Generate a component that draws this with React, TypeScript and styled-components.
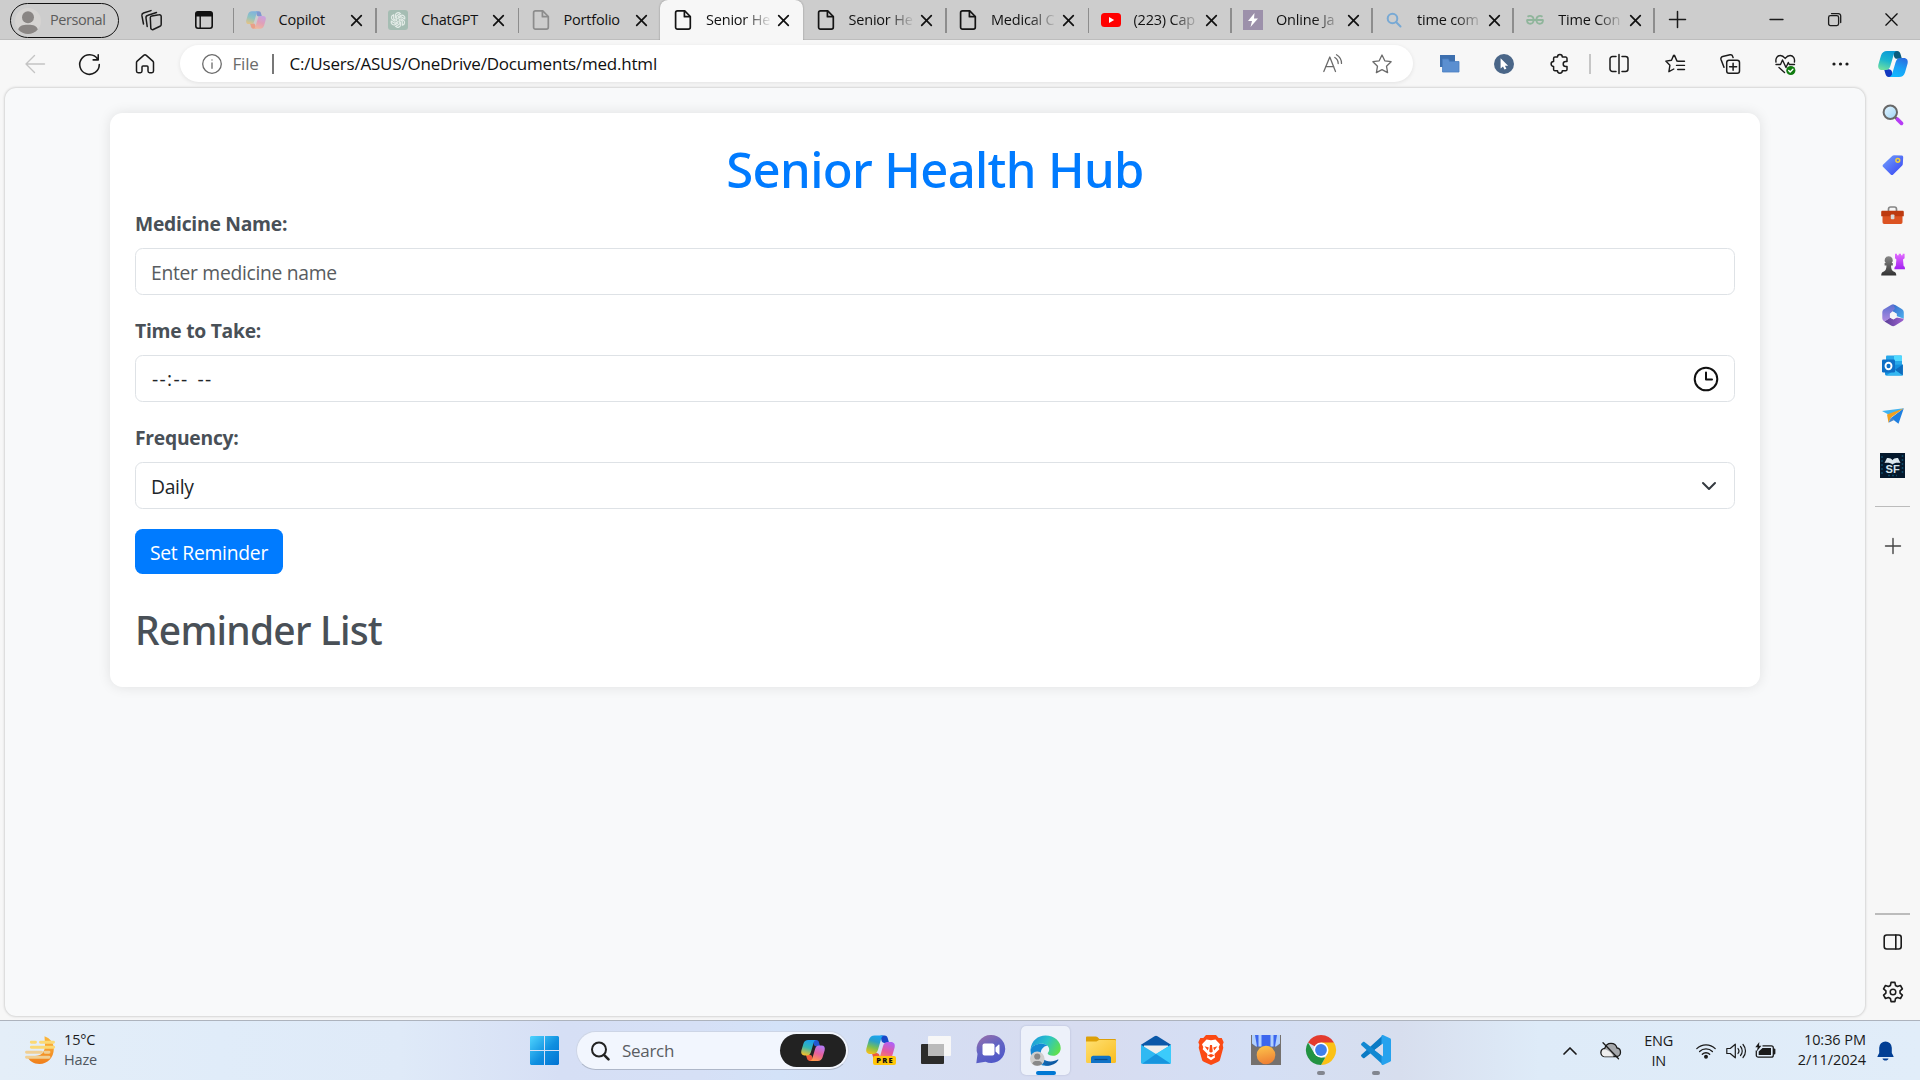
import React from "react";
import styled, { createGlobalStyle, css } from "styled-components";

const GlobalStyle = createGlobalStyle`
  *, *::before, *::after { box-sizing: border-box; }
  html, body { margin: 0; height: 100%; overflow: hidden; }
  body { font-family: "Open Sans", "Noto Sans", sans-serif; color: #1b1b1b; }
  svg { display: block; flex: none; overflow: visible; }
`;

/* ---------- window ---------- */

const Desktop = styled.div`
  width: 1920px;
  height: 1080px;
  display: flex;
  flex-direction: column;
  background: #f7f7f7;
  overflow: hidden;
`;

/* ---------- tab strip ---------- */

const TabStrip = styled.header`
  height: 40px;
  flex: none;
  display: flex;
  align-items: stretch;
  background: #cdcdcd;
  box-shadow: inset 0 -1px 0 #bdbdbd;
`;

const ProfileButton = styled.div`
  width: 109px;
  height: 35px;
  margin: 3px 0 0 10px;
  padding-left: 4px;
  display: flex;
  align-items: center;
  gap: 9px;
  border: 1.5px solid #111;
  border-radius: 18px;
  font-size: 14.5px;
  letter-spacing: -0.45px;
  color: #5c5c5c;
`;

const ProfileName = styled.span`
  padding-bottom: 2px;
`;

const StripTools = styled.div`
  width: 113.5px;
  padding: 0 20px 0 22px;
  display: flex;
  align-items: center;
  justify-content: space-between;
`;

const Tabs = styled.div`
  display: flex;
`;

const Tab = styled.div<{ $active?: boolean; $plain?: boolean }>`
  flex: none;
  width: 142.5px;
  display: flex;
  align-items: center;
  &:nth-child(n + 8) {
    width: 141.1px;
  }
  &::before {
    content: "";
    width: 1.5px;
    height: 25px;
    background: ${(p) => (p.$active || p.$plain ? "transparent" : "#8d8d8d")};
  }
  ${(p) =>
    p.$active &&
    css`
      background: #f7f7f7;
      border-radius: 8px 8px 0 0;
      box-shadow: 0 0 2px rgba(0, 0, 0, 0.35);
      clip-path: inset(0 -6px 0 -6px);
    `}
`;

const TabIcon = styled.span`
  width: 20px;
  margin-left: 11.5px;
  display: flex;
  justify-content: center;
`;

const TabLabel = styled.span<{ $fade?: boolean }>`
  width: 65px;
  margin-left: 13px;
  padding-bottom: 2px;
  white-space: nowrap;
  font-size: 14.5px;
  letter-spacing: -0.2px;
  color: #111;
  ${(p) =>
    p.$fade &&
    css`
      mask-image: linear-gradient(90deg, #000 38px, transparent 66px);
    `}
`;

const TabClose = styled.span`
  margin-left: 7px;
`;

const EndRule = styled.span`
  width: 1.5px;
  height: 25px;
  align-self: center;
  background: #8d8d8d;
`;

const NewTab = styled.span`
  margin-left: 14px;
  padding-bottom: 1px;
  display: flex;
  align-items: center;
`;

const WindowControls = styled.div`
  margin-left: auto;
  padding: 0 22px 1px 0;
  display: flex;
  align-items: center;
  gap: 44.5px;
`;

/* ---------- toolbar ---------- */

const Toolbar = styled.div`
  height: 48px;
  flex: none;
  display: flex;
  align-items: center;
  padding-left: 25px;
`;

const NavButtons = styled.div`
  width: 155px;
  display: flex;
  gap: 34.4px;
  align-items: center;
`;

const AddressBar = styled.div`
  width: 1233px;
  height: 37px;
  margin-top: -1px;
  padding: 0 21px 0 22px;
  display: flex;
  align-items: center;
  border-radius: 19px;
  background: #fff;
  box-shadow: 0 1px 4px rgba(0, 0, 0, 0.09);
  font-size: 17px;
`;

const Scheme = styled.span`
  width: 39.5px;
  margin-left: 10.5px;
  color: #6b6b6b;
  letter-spacing: -0.2px;
`;

const AddressRule = styled.span`
  width: 1.5px;
  height: 20px;
  background: #777;
`;

const Url = styled.span`
  margin-left: 16px;
  letter-spacing: -0.2px;
  color: #101010;
`;

const AddressActions = styled.span`
  margin-left: auto;
  display: flex;
  align-items: center;
  gap: 29px;
`;

const Actions = styled.div`
  flex: 1;
  display: flex;
  align-items: center;
  padding-left: 16px;
`;

const Action = styled.span<{ $w?: number }>`
  flex: none;
  width: ${(p) => p.$w ?? 55}px;
  display: flex;
  justify-content: center;
`;

const ActionRule = styled.span`
  width: 1.5px;
  height: 20px;
  background: #c6c6c6;
`;

/* ---------- page and sidebar ---------- */

const Body = styled.div`
  flex: 1;
  display: flex;
  padding: 0 0 4px 5px;
`;

const Viewport = styled.main`
  width: 1860px;
  padding: 25px 105px;
  border-radius: 11px;
  background: #f8f9fa;
  box-shadow: 0 0 3px rgba(0, 0, 0, 0.28);
`;

const Card = styled.section`
  padding: 25px;
  height: 574px;
  border-radius: 12.5px;
  background: #fff;
  box-shadow: 0 0 12.5px rgba(0, 0, 0, 0.1);
`;

const Title = styled.h1`
  margin: 0 0 10px;
  padding-top: 1px;
  height: 60px;
  font: 500 49px/60px "Noto Sans", sans-serif;
  letter-spacing: -0.65px;
  text-align: center;
  color: #007bff;
`;

const Field = styled.div`
  margin-bottom: 20px;
`;

const Label = styled.label`
  display: block;
  height: 30px;
  margin-bottom: 10px;
  font-size: 19.3px;
  line-height: 31px;
  font-weight: 700;
  letter-spacing: -0.25px;
  color: #495057;
`;

const Control = styled.div<{ $placeholder?: boolean }>`
  height: 47px;
  padding: 0 15.5px 0 15px;
  display: flex;
  align-items: center;
  justify-content: space-between;
  border: 1.25px solid #dee2e6;
  border-radius: 7.5px;
  font-size: 19.3px;
  letter-spacing: -0.3px;
  color: ${(p) => (p.$placeholder ? "#585c60" : "#212529")};
`;

const ControlText = styled.span`
  padding-top: 2px;
`;

const TimeValue = styled.span`
  padding: 0 0 0 1px;
  letter-spacing: 1.35px;
  word-spacing: 2.5px;
`;

const SubmitButton = styled.button`
  width: 148px;
  height: 45px;
  padding: 1px 0 0;
  border: 0;
  border-radius: 7.5px;
  background: #007bff;
  color: #fff;
  font: 400 19.3px "Open Sans", sans-serif;
  letter-spacing: -0.25px;
`;

const ListTitle = styled.h2`
  margin: 30.5px 0 0;
  font: 500 39px/49px "Noto Sans", sans-serif;
  letter-spacing: -0.8px;
  color: #495057;
`;

const Sidebar = styled.aside`
  flex: 1;
  padding: 2px 0 13px 0;
  display: flex;
  flex-direction: column;
  align-items: center;
`;

const SideSlot = styled.span<{ $h?: number }>`
  flex: none;
  height: ${(p) => p.$h ?? 50.1}px;
  display: flex;
  align-items: center;
`;

const SideRule = styled.span`
  width: 35px;
  height: 1.5px;
  background: #bcbcbc;
`;

const SideBottom = styled.div`
  margin-top: auto;
  display: flex;
  flex-direction: column;
  align-items: center;
`;

const SettingsSlot = styled.span`
  margin-top: 29px;
`;

/* ---------- taskbar ---------- */

const Taskbar = styled.footer`
  height: 60px;
  flex: none;
  display: grid;
  grid-template-columns: 530px 874px 1fr;
  align-items: center;
  border-top: 1px solid #adb3bd;
  background: linear-gradient(90deg, #e4eef8 0, #e0ecf9 220px, #dfeaf8 400px, #d6dff5 560px, #d6e0f6 700px, #d3e2f8 780px, #d5def3 900px, #d7dcf0 1080px, #d4dff5 1250px, #d7deee 1400px, #deebf8 1540px, #e1edf9 1920px);
`;

const Weather = styled.div`
  display: flex;
  align-items: center;
  gap: 9px;
  padding: 0 0 1px 25px;
`;

const TwoLines = styled.div<{ $align?: string }>`
  display: flex;
  flex-direction: column;
  font-size: 14.5px;
  line-height: 20px;
  text-align: ${(p) => p.$align ?? "left"};
  letter-spacing: -0.15px;
  white-space: nowrap;
`;

const Clock = styled(TwoLines)`
  letter-spacing: -0.05px;
  padding-bottom: 1px;
`;

const Muted = styled.span`
  color: #50575f;
`;

const Apps = styled.div`
  display: flex;
  align-items: center;
`;

const SearchBox = styled.div`
  flex: none;
  width: 273px;
  height: 39px;
  margin: 0 4px 0 17px;
  padding: 0 2px 0 13px;
  display: flex;
  align-items: center;
  border-radius: 20px;
  border: 1px solid #cdd5e6;
  border-bottom-color: #aeb7c9;
  background: #f2f6fe;
  font-size: 17px;
  letter-spacing: -0.3px;
  color: #5a5d62;
`;

const SearchText = styled.span`
  margin-left: 12px;
  flex: 1;
`;

const CopilotPill = styled.span`
  width: 66px;
  height: 33px;
  display: flex;
  align-items: center;
  justify-content: center;
  border-radius: 17px;
  background: #222;
`;

const TaskButton = styled.div<{ $active?: boolean; $running?: boolean }>`
  flex: none;
  width: 49px;
  height: 49px;
  margin: 0 3px;
  display: flex;
  flex-direction: column;
  align-items: center;
  justify-content: space-between;
  padding-top: 9px;
  border-radius: 5px;
  ${(p) =>
    p.$active &&
    css`
      background: #edf1fa;
      box-shadow: 0 0 2px rgba(80, 90, 130, 0.3);
    `}
  &::after {
    content: "";
    width: ${(p) => (p.$active ? 20 : 8)}px;
    height: 4px;
    border-radius: 2px;
    background: ${(p) => (p.$active ? "#0078d4" : p.$running ? "#82868f" : "transparent")};
  }
`;

const Tray = styled.div`
  display: flex;
  align-items: center;
  justify-content: flex-end;
  padding-right: 16px;
`;

const TrayIcons = styled.div`
  width: 80px;
  display: flex;
  align-items: center;
  justify-content: space-between;
  margin: 0 21.5px 0 23px;
`;

/* ---------- line icons ---------- */

type LineProps = { size?: number; box?: number; color?: string; width?: number; children: React.ReactNode };
const Line = ({ size = 20, box = 20, color = "#1b1b1b", width = 1.4, children }: LineProps) => (
  <svg width={size} height={size} viewBox={`0 0 ${box} ${box}`} fill="none" stroke={color} strokeWidth={width} strokeLinecap="round" strokeLinejoin="round">
    {children}
  </svg>
);

const CloseIcon = ({ size = 11, width = 1.7 }) => (
  <Line size={size} box={11} width={width} color="#111"><path d="M.7.7l9.6 9.6M10.3.7L.7 10.3" /></Line>
);
const DocIcon = ({ dim }: { dim?: boolean }) => (
  <Line color={dim ? "#8c8c8c" : "#141414"} width={1.7}>
    <path d="M4.5.9h7.2l5.6 5.6v10.8a1.9 1.9 0 0 1-1.9 1.9H4.5a1.9 1.9 0 0 1-1.9-1.9V2.8A1.9 1.9 0 0 1 4.5.9z" />
    <path d="M11.4 1.2v5.5h5.6" />
  </Line>
);

/* ---------- coloured icons ---------- */

type SwirlProps = { id: string; w: number; h: number; left: string[]; right: string[]; fold: string; foldEnd: string };
const Swirl = ({ id, w, h, left, right, fold, foldEnd }: SwirlProps) => (
  <svg width={w} height={h} viewBox="0 0 30 26">
    <defs>
      <linearGradient id={id + "a"} x1=".6" y1="0" x2=".3" y2="1">
        {left.map((c, i) => <stop key={i} offset={i / (left.length - 1)} stopColor={c} />)}
      </linearGradient>
      <linearGradient id={id + "b"} x1=".7" y1="0" x2=".3" y2="1">
        {right.map((c, i) => <stop key={i} offset={i / (right.length - 1)} stopColor={c} />)}
      </linearGradient>
    </defs>
    <path d="M15 0h4.2c2 0 2.9 1.3 3.4 3.2l1.3 4.6h-4.5c-2 0-3-.9-3.4-2.6z" fill={fold} />
    <path d="M15 26h-4.2c-2 0-2.9-1.3-3.4-3.2L6.1 18.2h4.5c2 0 3 .9 3.4 2.6z" fill={foldEnd} />
    <path d="M9 0h10.2c-1.8 0-2.8 1.2-3.4 3.2l-3.3 11.3c-.8 2.8-2 4.6-5 4.6H4.4C.9 19.1-.3 16.7.4 13.4L3 4.5C4 1.5 5.9 0 9 0z" fill={`url(#${id}a)`} />
    <path d="M21 26H10.8c1.8 0 2.8-1.2 3.4-3.2l3.3-11.3c.8-2.8 2-4.6 5-4.6h3.1c3.5 0 4.7 2.4 4 5.7l-2.6 8.9c-1 3-2.900 4.500-6 4.500z" fill={`url(#${id}b)`} />
  </svg>
);

const Avatar = ({ size = 26 }) => (
  <svg width={size} height={size} viewBox="0 0 26 26">
    <circle cx="13" cy="13" r="13" fill="#d6d4d2" />
    <circle cx="13" cy="9.3" r="6" fill="#8a8684" />
    <path d="M3.2 21.5c1-3.500 4-4.800 9.800-4.800s8.800 1.300 9.800 4.800A13 13 0 0 1 13 26a13 13 0 0 1-9.800-4.500z" fill="#8a8684" />
  </svg>
);

const ChatGptIcon = () => (
  <svg width="20" height="20" viewBox="0 0 20 20">
    <rect width="20" height="20" rx="3" fill="#a5bdb3" />
    <g fill="none" stroke="#e4ece8" strokeWidth="1.15">
      {[0, 60, 120, 180, 240, 300].map((a) => (
        <path key={a} transform={`rotate(${a} 10 10)`} d="M7.4 8.500V5.600a2.900 2.900 0 0 1 5-2l-3.700 2.200v4.100" />
      ))}
    </g>
  </svg>
);

const YoutubeIcon = () => (
  <svg width="20" height="14" viewBox="0 0 20 14"><rect width="20" height="14" rx="3.5" fill="#f00" /><path d="M8 4l5.200 3L8 10z" fill="#fff" /></svg>
);
const BoltIcon = () => (
  <svg width="20" height="20" viewBox="0 0 20 20"><rect width="20" height="20" fill="#9c90aa" /><path d="M11.500 3L5 11h4l-1.500 6L15 8.500h-4z" fill="#fff" /></svg>
);
const LookupIcon = () => (
  <Line color="#78a9d4" width={2}><circle cx="8.5" cy="8.5" r="4.8" /><path d="M12.300 12.300l4.200 4.200" /></Line>
);
const GeeksIcon = () => (
  <svg width="18" height="10" viewBox="0 0 18 10" fill="none" stroke="#8fb59b" strokeWidth="1.8">
    <path d="M1.500 1.800C3.500.2 7.600.5 7.600 4.800M.5 5h17M1 5c0 4.800 6.600 5.200 6.600 0M16.500 1.800C14.500.2 10.400.5 10.400 4.800M17 5c0 4.800-6.600 5.200-6.600 0" />
  </svg>
);

const WindowsExt = () => (
  <svg width="20" height="18" viewBox="0 0 20 18">
    <path d="M0 0h15v12H0z" fill="#3d6fae" />
    <path d="M2.500 4h6l1 2.500H19V17H2.500z" fill="#5b8fd0" stroke="#4a7fc2" strokeWidth=".8" />
  </svg>
);
const CursorExt = () => (
  <svg width="20" height="20" viewBox="0 0 20 20"><circle cx="10" cy="10" r="10" fill="#4a6688" /><path d="M6.600 4.200v10.400l2.400-2.100 1.500 3.100 1.900-.9-1.500-3h3.200z" fill="#fff" /></svg>
);
const PuzzleIcon = () => (
  <Line width={1.5}><path d="M7.500 3a2.400 2.400 0 0 1 4.800 0h3.300a1.400 1.400 0 0 1 1.400 1.400v3h-1.300a2.500 2.500 0 0 0 0 5H17v3a1.400 1.400 0 0 1-1.400 1.400h-3.300a2.400 2.400 0 0 1-4.800 0H5a1.400 1.400 0 0 1-1.400-1.400v-3a2.500 2.500 0 0 1 0-5v-3A1.400 1.400 0 0 1 5 3z" /></Line>
);
const SplitIcon = () => (
  <Line width={1.5}><path d="M10 .5v19M7 2.500H3.500A2.500 2.500 0 0 0 1 5v10a2.500 2.500 0 0 0 2.500 2.500H7M13 2.500h3.500A2.500 2.500 0 0 1 19 5v10a2.500 2.500 0 0 1-2.500 2.500H13" /></Line>
);
const FavoritesIcon = () => (
  <Line><path d="M12 7.100l-2.500-5.700a.5.5 0 0 0-.9 0L6.500 6.300.8 7.100l4.100 4.200-1 6.400 4.900-2.700M12.700 7.200h6.800M11.500 11.400h8M12.700 15.500h6.800" /></Line>
);
const CollectionsIcon = () => (
  <Line width={1.5}><rect x="6.7" y="6.2" width="12.8" height="13" rx="2.3" /><path d="M13.100 9.200v7M9.600 12.700h7M4 13.200L1 5.400a2.300 2.300 0 0 1 1.700-3L10 .8a2.300 2.300 0 0 1 2.700 1.600l.4 1.200" /></Line>
);
const HealthIcon = () => (
  <svg width="21" height="21" viewBox="0 0 21 21" fill="none" stroke="#1b1b1b" strokeWidth="1.4" strokeLinecap="round" strokeLinejoin="round">
    <path d="M1 8C.3 4.500 2.300 1.500 5.300 1.500 7.700 1.500 9 2.900 10.200 4.400 11.400 2.900 12.700 1.500 15.100 1.500c3 0 5 3 4.300 6.500M1 10.500h4.500l2-4.500 3.500 7.500 2.300-5 1 2h5.200M4 13.500l5.500 5" />
    <circle cx="15.8" cy="16.5" r="4.6" fill="#107c10" stroke="none" />
    <path d="M13.700 16.600l1.500 1.500 2.700-2.800" stroke="#fff" />
  </svg>
);

const MagnifierColor = () => (
  <svg width="22" height="22" viewBox="0 0 22 22">
    <defs><linearGradient id="mgl" x1="0" y1="0" x2="1" y2="1"><stop offset="0" stopColor="#e4f5ff" /><stop offset="1" stopColor="#9fd4f5" /></linearGradient></defs>
    <path d="M13 13l2.500 2.500" stroke="#666" strokeWidth="2.5" />
    <path d="M15.500 15.300l4 4" stroke="#b63cf5" strokeWidth="3.8" strokeLinecap="round" />
    <circle cx="8.3" cy="8.3" r="6.7" fill="url(#mgl)" stroke="#686868" strokeWidth="2" />
  </svg>
);
const TagIcon = () => (
  <svg width="22" height="22" viewBox="0 0 22 22">
    <defs><linearGradient id="tag" x1="0" y1="0" x2="1" y2="1"><stop offset="0" stopColor="#74a4fb" /><stop offset="1" stopColor="#3540f4" /></linearGradient></defs>
    <path d="M12 1.300l7.500.2c1 0 1.700.7 1.700 1.700l-.4 6.900c0 .7-.3 1.200-.8 1.700l-8.800 8.700c-.8.8-1.700.8-2.500 0L1.200 13c-.8-.8-.8-1.700 0-2.500l9-8.500c.5-.5 1.100-.7 1.800-.7z" fill="url(#tag)" />
    <circle cx="15.8" cy="6.3" r="1.9" fill="#5073e8" stroke="#f3cf3b" strokeWidth="1.5" />
  </svg>
);
const ToolboxIcon = () => (
  <svg width="23" height="19" viewBox="0 0 23 19">
    <path d="M7.500 5V3.200C7.500 1.800 8.300 1 9.600 1h3.800c1.300 0 2.100.8 2.100 2.200V5" fill="none" stroke="#858585" strokeWidth="1.7" />
    <path d="M1.500 9.500h20v6.700a1.700 1.700 0 0 1-1.700 1.700H3.200a1.700 1.700 0 0 1-1.700-1.700z" fill="#dc5322" />
    <path d="M1.500 4.800h20c.8 0 1.300.5 1.300 1.300v4.200H.2V6.100c0-.8.5-1.300 1.300-1.300z" fill="#bd3a10" />
    <rect x="9.8" y="8.5" width="3.6" height="4.8" rx=".8" fill="#d9d9d9" />
  </svg>
);
const ChessIcon = () => (
  <svg width="24" height="24" viewBox="0 0 24 24">
    <defs>
      <linearGradient id="pawn" x1="0" y1="0" x2="0" y2="1"><stop offset="0" stopColor="#888" /><stop offset="1" stopColor="#333" /></linearGradient>
      <linearGradient id="rook" x1="0" y1="0" x2="0" y2="1"><stop offset="0" stopColor="#e26bff" /><stop offset="1" stopColor="#a020f0" /></linearGradient>
    </defs>
    <path d="M14 .8h2v1.500h1.700V.8h2.300v1.500h1.600V.8h2v4.400l-1.600 1.300.6 6.500c1.300.5 1.400 1.700 1.400 3.300H13.400c0-1.700.3-2.800 1.400-3.300l.6-6.500L14 5.200z" fill="url(#rook)" />
    <path d="M7.700 3.200a4 4 0 0 1 3 6.700h1.100v2.500H10c.1 3 .6 4.900 2.600 6 1.800.5 2.700 1.800 2.700 4H.2c0-2.200.9-3.500 2.700-4 2-1.100 2.500-3 2.600-6H3.600V9.900h1.100a4 4 0 0 1 3-6.700z" fill="url(#pawn)" />
  </svg>
);
const M365Icon = () => (
  <svg width="22" height="23" viewBox="0 0 22 23">
    <defs>
      <linearGradient id="ma" x1="0" y1="0" x2="0" y2="1"><stop offset="0" stopColor="#5a6fd0" /><stop offset="1" stopColor="#b08ae0" /></linearGradient>
      <linearGradient id="mb" x1="0" y1="0" x2="1" y2="1"><stop offset="0" stopColor="#3565c8" /><stop offset="1" stopColor="#4fb0ee" /></linearGradient>
      <linearGradient id="mc" x1="0" y1="0" x2="1" y2="0"><stop offset="0" stopColor="#5b3f98" /><stop offset="1" stopColor="#9d62cf" /></linearGradient>
    </defs>
    <path d="M9 1c1.400-.8 2.800-.8 4.200 0l6.600 4c1.400.8 2 1.900 2 3.500v6.200L14.500 12V9.800L10 7z" fill="url(#mb)" />
    <path d="M2.500 17.400L8.100 13.500l3.200 1.800 3.200-1.800 7.200 1.200c-.2 1.300-.8 2.200-2 2.900l-6.500 4c-1.400.8-2.800.8-4.200 0z" fill="url(#mc)" />
    <path d="M11.500.4L13 4.500 8.100 9.800v4.200L2.500 17.400C1 16.500.3 15.500.3 14V8.500c0-1.600.7-2.800 2-3.500L9 1z" fill="url(#ma)" />
    <path d="M11.300 7.800l3.400 1.900v3.900l-3.400 1.900-3.400-1.900V9.700z" fill="#f7f7f7" />
  </svg>
);
const OutlookIcon = () => (
  <svg width="21" height="21" viewBox="0 0 21 21">
    <path d="M5 .5h14a1 1 0 0 1 1 1V12H4V1.500a1 1 0 0 1 1-1z" fill="#28a8ea" />
    <path d="M12 .5h7a1 1 0 0 1 1 1V6h-8z" fill="#50d9ff" />
    <path d="M3 10l17.800-.5V19a1.500 1.500 0 0 1-1.500 1.500H4.500A1.500 1.500 0 0 1 3 19z" fill="#1490df" />
    <path d="M20.800 9.500v11L13 15z" fill="#0f6cbd" />
    <path d="M4 20.500L13 15l7.800 5.500z" fill="#35b8f1" />
    <rect y="4.5" width="13" height="13" rx="1.3" fill="#0f6fc6" />
    <ellipse cx="6.5" cy="11" rx="3" ry="3.3" fill="none" stroke="#fff" strokeWidth="1.9" />
  </svg>
);
const PlaneIcon = () => (
  <svg width="22" height="16" viewBox="0 0 22 16">
    <path d="M0 3L21.800.3 9 8.500 5.500 6z" fill="#3fb3f2" />
    <path d="M21.800.3L16.500 15.700 9 10z" fill="#1f7fe0" />
    <path d="M21.800.3L5 6.500l1.500 8.300L9 9.500z" fill="#f0a020" />
    <path d="M6.500 14.800L9 9.500l3.200 2.400z" fill="#4a86c8" />
  </svg>
);
const BookText = styled.text`
  font: 700 10.5px "Liberation Sans", sans-serif;
  fill: #d5e4ec;
`;
const BookIcon = () => (
  <svg width="25" height="25" viewBox="0 0 25 25">
    <rect width="25" height="25" fill="#04182c" />
    <path d="M2 3v19M22.500 2v20M8 22.500h9" stroke="#0d4766" strokeWidth="1.5" strokeDasharray="2 2" />
    <path d="M4.500 10L7 5c2.500-.3 4.500.5 5.500 2.200C13.500 5.500 15.500 4.700 18 5l2.500 5c-3.500-.6-6.500-.1-8 1.500-1.500-1.600-4.500-2.100-8-1.500z" fill="#dbe7ee" />
    <BookText x="5.5" y="20.3" textLength="14.2" lengthAdjust="spacingAndGlyphs">SF</BookText>
  </svg>
);
const PanelIcon = () => (
  <Line width={1.6}><rect x="1.2" y="3" width="17" height="14" rx="2.5" /><path d="M12.800 3v14" /></Line>
);
const GearIcon = () => (
  <svg width="22" height="22" viewBox="0 0 22 22" fill="none" stroke="#1b1b1b" strokeWidth="1.5" strokeLinejoin="round">
    <path d="M9.200 1h3.600l.6 2.900 1.800 1 2.800-1 1.800 3.100-2.200 2v2l2.200 2-1.800 3.100-2.800-1-1.800 1-.6 2.900H9.200l-.6-2.900-1.800-1-2.800 1L2.200 13l2.200-2V9L2.200 7 4 3.900l2.800 1 1.800-1z" transform="translate(-.8 .3) scale(1.070)" />
    <circle cx="11" cy="11" r="2.8" />
  </svg>
);

/* ---------- taskbar icons ---------- */

const StartIcon = () => (
  <svg width="29" height="29" viewBox="0 0 29 29">
    <defs><linearGradient id="win" gradientUnits="userSpaceOnUse" x1="0" y1="0" x2="29" y2="29"><stop offset="0" stopColor="#4fd4fe" /><stop offset=".55" stopColor="#0f8fe0" /><stop offset="1" stopColor="#0072d2" /></linearGradient></defs>
    <path d="M1 0h13v14H0V1zM15 0h13l1 1v13H15zM0 15h14v14H1l-1-1zM15 15h14v13l-1 1H15z" fill="url(#win)" />
  </svg>
);
const PreText = styled.text`
  font: 800 7.5px "Open Sans", sans-serif;
  fill: #111;
`;
const PreviewBadge = styled.span`
  position: absolute;
  right: -1px;
  bottom: -1px;
`;
const IconStack = styled.span`
  position: relative;
  width: 29px;
  height: 29px;
`;
const CopilotPreview = () => (
  <IconStack>
    <Swirl id="cpre" w={29} h={26} left={["#1aa5f0", "#2aa0c8", "#7cc050", "#f3c01a"]} right={["#b061f5", "#e65a9c", "#ff9448"]} fold="#1647c8" foldEnd="#ef5a3c" />
    <PreviewBadge>
      <svg width="23" height="9" viewBox="0 0 23 9"><rect width="23" height="9" rx="2" fill="#ffc60a" /><PreText x="3.2" y="7.3" textLength="16.5">PRE</PreText></svg>
    </PreviewBadge>
  </IconStack>
);
const TaskViewIcon = () => (
  <svg width="31" height="29" viewBox="0 0 31 29">
    <rect x="1" y="9" width="23" height="20" rx="1" fill="#2c2c2b" />
    <rect x="8" y="1" width="23" height="20" rx="1" fill="#f7f7f7" />
    <path d="M8 9h16v12H9a1 1 0 0 1-1-1z" fill="#bababa" />
  </svg>
);
const ChatIcon = () => (
  <svg width="30" height="29" viewBox="0 0 30 29">
    <defs><linearGradient id="cht" x1=".1" y1="0" x2=".6" y2="1"><stop offset="0" stopColor="#9a6fa8" /><stop offset=".5" stopColor="#6264c4" /><stop offset="1" stopColor="#5058c8" /></linearGradient></defs>
    <path d="M15 0a14 14 0 1 1-5.500 26.800L.3 28.300 1.500 19A14 14 0 0 1 15 0z" fill="url(#cht)" />
    <rect x="6.5" y="8.5" width="12" height="12" rx="2" fill="#fff" />
    <path d="M19.500 12.500l3-2.800c.5-.4 1-.2 1 .4v8.800c0 .6-.5.8-1 .4l-3-2.800z" fill="#fff" />
  </svg>
);
const EdgeIcon = () => (
  <svg width="31" height="31" viewBox="0 0 31 31">
    <defs>
      <linearGradient id="ed1" x1="0" y1=".2" x2="1" y2=".6"><stop offset="0" stopColor="#1a96dc" /><stop offset=".5" stopColor="#2ac3c9" /><stop offset="1" stopColor="#5fe04e" /></linearGradient>
      <linearGradient id="ed2" x1="0" y1="0" x2="1" y2="1"><stop offset="0" stopColor="#1580cf" /><stop offset="1" stopColor="#0c4f96" /></linearGradient>
    </defs>
    <path d="M.5 14.500C1.500 5.500 8 .5 15.500.5c9 0 15.200 6 15.200 12.500 0 4.500-3.300 7.800-7.700 7.800-3.200 0-5.300-1.100-5.300-2.300 0-.9 1.500-1.500 1.500-4C19.200 11.200 16 8.800 11.500 8.800 6.500 8.800 2.500 11 .5 14.500z" fill="url(#ed1)" />
    <path d="M.5 14.500c2-3.700 6-5.800 11-5.700 2.500 0 4.700.8 6 2-4.500.4-6.800 4-6.800 8 0 5.500 4 10 10.300 11.300C12 33 .5 27.500.5 15.500z" fill="#1488d4" />
    <path d="M10.900 17c-.8 6 3.500 9.500 9.600 9.500 3 0 5.500-.9 7.200-1.900.6-.3 1 .1.600.7-2.500 3.700-6.500 5.400-10.300 5.400-7 0-9.500-6.500-7.100-13.700z" fill="url(#ed2)" />
    <g transform="translate(0 16.500) scale(.56)"><circle cx="13" cy="13" r="13" fill="#cfcecd" /><circle cx="13" cy="9" r="5.5" fill="#888" /><path d="M4 22c1-4 4-5 9-5s8 1 9 5a13 13 0 0 1-18 0z" fill="#888" /></g>
  </svg>
);
const FolderIcon = () => (
  <svg width="30" height="29" viewBox="0 0 30 29">
    <defs><linearGradient id="fol" x1="0" y1="0" x2="1" y2="1"><stop offset="0" stopColor="#ffe072" /><stop offset="1" stopColor="#f9bd20" /></linearGradient></defs>
    <path d="M1.200 1.500h8.600c.7 0 1.200.2 1.600.6l2 1.900h15.400c.7 0 1.200.5 1.200 1.200V12H0V2.700c0-.7.5-1.200 1.200-1.200z" fill="#dda008" />
    <path d="M0 6.500h10.500l2.500-1.500h15.800c.7 0 1.200.5 1.200 1.200v20.500c0 .7-.5 1.200-1.200 1.200H1.200c-.7 0-1.200-.5-1.200-1.200z" fill="url(#fol)" />
    <path d="M7.200 20.800h15.600c1.200 0 2.200 1 2.200 2.200v5H5v-5c0-1.200 1-2.200 2.200-2.200z" fill="#1173c6" /><path d="M8.500 24.500h13" stroke="#0b4c8a" strokeWidth="1.2" />
  </svg>
);
const MailIcon = () => (
  <svg width="30" height="29" viewBox="0 0 30 29">
    <path d="M0 9.800L13.500 1.300a3 3 0 0 1 3 0L30 9.800v3H0z" fill="#0b58a8" />
    <path d="M3 10.500h24v8H3z" fill="#eee" />
    <path d="M0 9.800l15 9.300L30 9.800V27.500a1.200 1.200 0 0 1-1.200 1.200H1.200A1.200 1.200 0 0 1 0 27.500z" fill="#2fb9f2" />
    <path d="M30 9.800V27.500c0 .5-.3.900-.7 1.100L15 19.100z" fill="#3bcbfb" />
    <path d="M15 19.100l14.300 9.500-.5.100H1.200z" fill="#1795de" />
  </svg>
);
const BraveIcon = () => (
  <svg width="26" height="30" viewBox="0 0 26 30">
    <path d="M8 0h10l2.700 3h3l2 4.200-1 2.600.6 3-3.300 12c-.3 1-.9 1.500-1.700 2L13 30l-7.300-3.200c-.8-.5-1.400-1-1.700-2L.7 12.800l.6-3-1-2.600 2-4.200h3z" fill="#fb4a14" />
    <path d="M8.500 4.500l4.500.8 4.500-.8 4.500 4.800-1.300 3 .6 2-4.800 4.700.5 3.500-4 2.800-4-2.800.5-3.500L4.700 14.300l.6-2L4 9.300z" fill="#fff" />
    <path d="M6.500 11.300l4.300 1.200-1 3zM19.500 11.300l-4.300 1.200 1 3zM12 10h2l.8 6.500L13 17.700l-1.800-1.200zM9.500 20.300l3.500-1.300 3.500 1.300-3.500 2.200z" fill="#fb4a14" />
  </svg>
);
const MedalIcon = () => (
  <svg width="30" height="30" viewBox="0 0 30 30">
    <defs><linearGradient id="med" x1=".4" y1="0" x2=".6" y2="1"><stop offset="0" stopColor="#fcc24a" /><stop offset="1" stopColor="#ee7d33" /></linearGradient></defs>
    <rect width="30" height="30" fill="#75716e" />
    <path d="M1 0h28v8.500l-4 3H5l-4-3z" fill="#3c66ee" />
    <path d="M1 0h3l2 11.500H5l-4-3zM7.500 0h3v11.500h-3zM19.500 0h3v11.500h-3zM26 0h3v8.500l-4 3h-1z" fill="#b2d0fb" />
    <circle cx="15" cy="20" r="9.3" fill="url(#med)" />
  </svg>
);
const ChromeIcon = () => (
  <svg width="30" height="30" viewBox="0 0 30 30">
    <path d="M15 15L2 7.500A15 15 0 0 1 28 7.500z" fill="#e33b2e" />
    <path d="M15 7.500h13A15 15 0 0 1 15 30l6.500-11.300z" fill="#fbc116" />
    <path d="M2 7.500l6.500 11.200L15 22.500h4.300L15 30A15 15 0 0 1 2 7.500z" fill="#229342" />
    <circle cx="15" cy="15" r="7.5" fill="#fff" /><circle cx="15" cy="15" r="5.9" fill="#3f7fec" />
  </svg>
);
const CodeIcon = () => (
  <svg width="30" height="30" viewBox="0 0 30 30">
    <path d="M22 .3v8.200L3.500 23c-.5.4-1.100.3-1.500 0L.4 21.500c-.5-.5-.5-1.200 0-1.700L21 .9z" fill="#0b7ac4" />
    <path d="M22 29.700v-8.200L3.500 7c-.5-.4-1.100-.3-1.500 0L.4 8.500c-.5.5-.5 1.200 0 1.700L21 29.100z" fill="#1288d2" />
    <path d="M22 0l7 3.200c.6.3 1 .8 1 1.500v20.600c0 .7-.4 1.200-1 1.500L22 30c-.8.3-1.500 0-1.500-.9V.9C20.500 0 21.200-.3 22 0z" fill="#26a2ee" />
    <path d="M22 8.500v13L13.700 15z" fill="#d7dcee" />
  </svg>
);
const HazeIcon = () => (
  <svg width="30" height="28" viewBox="0 0 30 28">
    <defs><linearGradient id="hz" x1="0" y1="0" x2="0" y2="1"><stop offset="0" stopColor="#fbb83c" /><stop offset="1" stopColor="#f07f1c" /></linearGradient></defs>
    <path d="M19.500.3c6 2 9.300 7 9.300 12.700C28.800 21.500 22.500 28 14.500 28c-6 0-10.500-3.200-12.500-8h8c6 0 10-4 10-10.500 0-4-.5-7-.5-9.200z" fill="url(#hz)" />
    <g strokeWidth="2.9" strokeLinecap="round"><path d="M6.300 6.300h4.200M15.500 6.300h13M6.300 11.300h22.400" stroke="#fbd974" /><path d="M1.500 16.300h15M20 16.300h4M1.500 21.300h22.500" stroke="#f0cf94" /></g>
  </svg>
);
const CloudOffIcon = () => (
  <svg width="21" height="18" viewBox="0 0 21 18" fill="none" stroke="#1b1b1b" strokeWidth="1.3" strokeLinejoin="round" strokeLinecap="round">
    <path d="M5 14.500a4 4 0 0 1-.3-8C5.500 3.500 8 1.300 11 1.300c3 0 5.300 2 6 4.700 2 .2 3.500 2 3.500 4.200 0 2.400-1.700 4.300-4 4.300z" fill="#a5a8ac" />
    <path d="M2.500 8c3-1.300 7.500.5 11 6.500H5C2.700 14.500.5 12 2.500 8z" fill="#eee" stroke="none" />
    <path d="M3 .8l15.500 16" />
  </svg>
);
const WifiIcon = () => (
  <svg width="20" height="16" viewBox="0 0 20 16" fill="none" stroke="#1b1b1b" strokeWidth="1.3" strokeLinecap="round">
    <path d="M.8 5.600a13 13 0 0 1 18.400 0M3.600 8.500a9 9 0 0 1 12.800 0M6.300 11.300a5.200 5.200 0 0 1 7.400 0" /><circle cx="10" cy="13.7" r="1.3" fill="#1b1b1b" />
  </svg>
);
const SpeakerIcon = () => (
  <svg width="20" height="16" viewBox="0 0 20 16" fill="none" stroke="#1b1b1b" strokeWidth="1.2" strokeLinecap="round" strokeLinejoin="round">
    <path d="M.8 5.500h3.400L9.300 1.200v13.600l-5.100-4.300H.8zM12 5.500c1.200 1.500 1.200 3.500 0 5M14.500 3.500c2.300 2.500 2.300 6.500 0 9M17 1.500c3.300 3.700 3.300 9.300 0 13" />
  </svg>
);
const BatteryIcon = () => (
  <svg width="21" height="17" viewBox="0 0 21 17">
    <path d="M7.500 3.800h8.800a2 2 0 0 1 2 2v7.400a2 2 0 0 1-2 2H3.300a2 2 0 0 1-2-2V8.500" fill="none" stroke="#1b1b1b" strokeWidth="1.3" />
    <path d="M7.500 6H16v7H3.700V9.500z" fill="#1b1b1b" /><path d="M19.300 7.500v4" stroke="#1b1b1b" strokeWidth="2.2" strokeLinecap="round" />
    <path d="M4.300 0L.3 5.300h2.400L1.800 9.500l4.600-5.700H4z" fill="#1b1b1b" />
  </svg>
);
const BellIcon = () => (
  <svg width="17" height="20" viewBox="0 0 17 20" fill="#023f94">
    <path d="M8.500.5a6.300 6.300 0 0 1 6.300 6.300V12l1.700 3.200c.2.5 0 .9-.6.900H1.100c-.6 0-.8-.4-.6-.9L2.200 12V6.800A6.300 6.300 0 0 1 8.500.5zM5.500 17.400h6c-.4 1.300-1.500 2.100-3 2.100s-2.600-.8-3-2.100z" />
  </svg>
);

/* ---------- data ---------- */

const tabs: { label: string; icon: React.ReactNode; fade?: boolean; active?: boolean; plain?: boolean }[] = [
  { label: "Copilot", icon: <Swirl id="ctab" w={20} h={18} left={["#7fb2dd", "#8fc4c2", "#e3c386"]} right={["#c8a3e0", "#e0a0b8", "#f0b89c"]} fold="#8098d0" foldEnd="#e8a088" /> },
  { label: "ChatGPT", icon: <ChatGptIcon /> },
  { label: "Portfolio", icon: <DocIcon dim /> },
  { label: "Senior He", icon: <DocIcon />, fade: true, active: true },
  { label: "Senior He", icon: <DocIcon />, fade: true, plain: true },
  { label: "Medical C", icon: <DocIcon />, fade: true },
  { label: "(223) Cap", icon: <YoutubeIcon />, fade: true },
  { label: "Online Ja", icon: <BoltIcon />, fade: true },
  { label: "time com", icon: <LookupIcon />, fade: true },
  { label: "Time Con", icon: <GeeksIcon />, fade: true },
];

const sideIcons = [MagnifierColor, TagIcon, ToolboxIcon, ChessIcon, M365Icon, OutlookIcon, PlaneIcon, BookIcon];

const apps: { icon: React.ReactNode; active?: boolean; running?: boolean }[] = [
  { icon: <CopilotPreview /> },
  { icon: <TaskViewIcon /> },
  { icon: <ChatIcon /> },
  { icon: <EdgeIcon />, active: true },
  { icon: <FolderIcon /> },
  { icon: <MailIcon /> },
  { icon: <BraveIcon /> },
  { icon: <MedalIcon /> },
  { icon: <ChromeIcon />, running: true },
  { icon: <CodeIcon />, running: true },
];

/* ---------- sections ---------- */

const BrowserTabs = () => (
  <TabStrip>
    <ProfileButton><Avatar /><ProfileName>Personal</ProfileName></ProfileButton>
    <StripTools>
      <Line size={21} box={21} width={1.5}>
        <path d="M9.300 7.500a1.800 1.800 0 0 1 1.500-1.600l7.200-1.200a1.800 1.800 0 0 1 2.200 1.800v8a2 2 0 0 1-1.200 1.800l-6.800 3.200a1.800 1.800 0 0 1-2.400-1.200zM6.200 16.500L5 8a2.500 2.500 0 0 1 2-2.800L15.500 2.500M2.500 14L.9 5.700A2.500 2.500 0 0 1 2.500 3L10 .6" />
      </Line>
      <svg width="18" height="18" viewBox="0 0 18 18"><rect x=".8" y=".8" width="16.4" height="16.4" rx="2.2" fill="none" stroke="#111" strokeWidth="1.6" /><path d="M.5 5.500V3A2.500 2.500 0 0 1 3 .5h12A2.500 2.500 0 0 1 17.500 3v2.500z" fill="#111" /><path d="M5.200 5v12" stroke="#111" strokeWidth="1.4" /></svg>
    </StripTools>
    <Tabs>
      {tabs.map((t, i) => (
        <Tab key={i} $active={t.active} $plain={t.plain}>
          <TabIcon>{t.icon}</TabIcon>
          <TabLabel $fade={t.fade}>{t.label}</TabLabel>
          <TabClose><CloseIcon /></TabClose>
        </Tab>
      ))}
    </Tabs>
    <EndRule />
    <NewTab><Line size={17} box={17} width={1.5}><path d="M8.500.5v16M.5 8.500h16" /></Line></NewTab>
    <WindowControls>
      <Line size={13} box={13} width={1.3}><path d="M0 6.500h13" /></Line>
      <Line size={13} box={13} width={1.3}><rect x=".6" y="2.6" width="10" height="10" rx="1.8" /><path d="M3.500.6h6.800a2.400 2.400 0 0 1 2.400 2.400v6.500" /></Line>
      <CloseIcon size={13} width={1.1} />
    </WindowControls>
  </TabStrip>
);

const BrowserToolbar = () => (
  <Toolbar>
    <NavButtons>
      <Line color="#c4c4c4"><path d="M9.500 1.500L1 10l8.500 8.500M1 10h18.500" /></Line>
      <Line size={21} width={1.5}><path d="M17.800 5A9.300 9.300 0 1 0 19.300 10M18.300.8v4.800h-4.800" /></Line>
      <Line width={1.5}><path d="M1.500 8.600c0-.6.300-1.100.7-1.500l6.500-5.700a2 2 0 0 1 2.600 0l6.500 5.700c.4.4.7.9.7 1.500v8.500a1.600 1.600 0 0 1-1.600 1.600h-2.300a1.600 1.600 0 0 1-1.600-1.600v-4.200a1 1 0 0 0-1-1H8a1 1 0 0 0-1 1v4.200a1.600 1.600 0 0 1-1.600 1.600H3.100a1.600 1.600 0 0 1-1.600-1.600z" /></Line>
    </NavButtons>
    <AddressBar>
      <Line color="#6b6b6b" width={1.3}><circle cx="10" cy="10" r="9.3" /><path d="M10 9v5.300M10 5.800v.2" /></Line>
      <Scheme>File</Scheme>
      <AddressRule />
      <Url>C:/Users/ASUS/OneDrive/Documents/med.html</Url>
      <AddressActions>
        <Line color="#6b6b6b" width={1.3}><path d="M.8 17.500L6.800 3l5.700 14.500M2.600 12.700h8.200M11.800 3.500a7 7 0 0 1 3.400 6M13.500.7a10 10 0 0 1 5 8.700" /></Line>
        <Line color="#6b6b6b" width={1.3}><path d="M10 1l2.800 5.800 6.300.9-4.600 4.500 1.100 6.400L10 15.600l-5.600 3 1.100-6.400L.9 7.700l6.300-.9z" /></Line>
      </AddressActions>
    </AddressBar>
    <Actions>
      <Action $w={41}><WindowsExt /></Action>
      <Action $w={68}><CursorExt /></Action>
      <Action $w={43}><PuzzleIcon /></Action>
      <Action $w={8} />
      <ActionRule />
      <Action $w={57}><SplitIcon /></Action>
      <Action><FavoritesIcon /></Action>
      <Action><CollectionsIcon /></Action>
      <Action><HealthIcon /></Action>
      <Action><svg width="17" height="4" viewBox="0 0 17 4" fill="#1b1b1b"><circle cx="2" cy="2" r="1.6" /><circle cx="8.5" cy="2" r="1.6" /><circle cx="15" cy="2" r="1.6" /></svg></Action>
      <Action $w={51}><Swirl id="cbar" w={30} h={26} left={["#0a9ad6", "#1bb6cf", "#6fe0a0"]} right={["#2a6fe0", "#1aa0f5", "#12b9ff"]} fold="#0a5c7e" foldEnd="#1238c0" /></Action>
    </Actions>
  </Toolbar>
);

const ReminderForm = () => (
  <Card>
    <Title>Senior Health Hub</Title>
    <Field>
      <Label>Medicine Name:</Label>
      <Control $placeholder><ControlText>Enter medicine name</ControlText></Control>
    </Field>
    <Field>
      <Label>Time to Take:</Label>
      <Control>
        <TimeValue>--:-- --</TimeValue>
        <Line size={26} box={26} width={2} color="#111"><circle cx="13" cy="13" r="11.3" /><path d="M13 6.500v7h6" /></Line>
      </Control>
    </Field>
    <Field>
      <Label>Frequency:</Label>
      <Control>
        <ControlText>Daily</ControlText>
        <Line size={20} box={20} width={2} color="#343a40"><path d="M4 7l6 6 6-6" /></Line>
      </Control>
    </Field>
    <SubmitButton>Set Reminder</SubmitButton>
    <ListTitle>Reminder List</ListTitle>
  </Card>
);

const EdgeSidebar = () => (
  <Sidebar>
    {sideIcons.map((Icon, i) => <SideSlot key={i}><Icon /></SideSlot>)}
    <SideSlot $h={31}><SideRule /></SideSlot>
    <SideSlot $h={48}><Line size={16} box={16} color="#444"><path d="M8 .5v15M.5 8h15" /></Line></SideSlot>
    <SideBottom>
      <SideSlot $h={36}><SideRule /></SideSlot>
      <SideSlot $h={20}><PanelIcon /></SideSlot>
      <SettingsSlot><GearIcon /></SettingsSlot>
    </SideBottom>
  </Sidebar>
);

const WindowsTaskbar = () => (
  <Taskbar>
    <Weather>
      <HazeIcon />
      <TwoLines><span>15°C</span><Muted>Haze</Muted></TwoLines>
    </Weather>
    <Apps>
      <StartIcon />
      <SearchBox>
        <Line color="#222" width={2}><circle cx="9" cy="8.5" r="7" /><path d="M14 13.800l4.500 4.500" strokeWidth="2.6" /></Line>
        <SearchText>Search</SearchText>
        <CopilotPill><Swirl id="cpill" w={24} h={21} left={["#1a9df0", "#35b8b0", "#f5c02a"]} right={["#b57af5", "#e6609c", "#ff9a4a"]} fold="#2458d0" foldEnd="#ef5a3c" /></CopilotPill>
      </SearchBox>
      {apps.map((a, i) => <TaskButton key={i} $active={a.active} $running={a.running}>{a.icon}</TaskButton>)}
    </Apps>
    <Tray>
      <Line size={14} box={14} width={1.7}><path d="M1 10l6-6 6 6" /></Line>
      <Action $w={67}><CloudOffIcon /></Action>
      <TwoLines $align="center"><span>ENG</span><span>IN</span></TwoLines>
      <TrayIcons><WifiIcon /><SpeakerIcon /><BatteryIcon /></TrayIcons>
      <Clock $align="right"><span>10:36 PM</span><span>2/11/2024</span></Clock>
      <Action $w={38}><BellIcon /></Action>
    </Tray>
  </Taskbar>
);

export default function App() {
  return (
    <Desktop>
      <GlobalStyle />
      <BrowserTabs />
      <BrowserToolbar />
      <Body>
        <Viewport><ReminderForm /></Viewport>
        <EdgeSidebar />
      </Body>
      <WindowsTaskbar />
    </Desktop>
  );
}
